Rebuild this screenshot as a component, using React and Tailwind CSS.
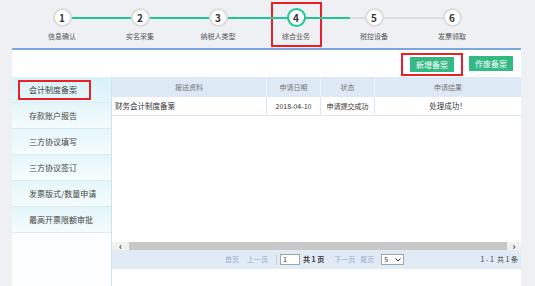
import React from "react";

const steps = ["信息确认", "实名采集", "纳税人类型", "综合业务", "税控设备", "发票领取"];
const menu = ["会计制度备案", "存款账户报告", "三方协议填写", "三方协议签订", "发票版式/数量申请", "最高开票限额审批"];

function Step({ n, label, active }) {
  const circle = (
    <div
      className={`relative z-10 w-[19px] h-[19px] rounded-full bg-white flex items-center justify-center text-[10px] font-bold text-[#333] border-[2.5px] ${
        active ? "border-[#1ec795]" : "border-[#dcdcdc]"
      }`}
    >
      {n}
    </div>
  );
  const text = <div className="mt-[4px] text-[7px] leading-[10px] text-[#555] whitespace-nowrap">{label}</div>;

  if (active) {
    return (
      <div className="w-[78px] flex justify-center">
        <div className="mt-[2px] w-[51px] h-[45px] border-2 border-[#e8202a] flex flex-col items-center pt-[4px]">
          {circle}
          {text}
        </div>
      </div>
    );
  }
  return (
    <div className="w-[78px] flex flex-col items-center pt-[8px]">
      {circle}
      {text}
    </div>
  );
}

export default function App() {
  return (
    <div className="w-[535px] h-[286px] overflow-hidden bg-[#eef0f4] pl-[12px] pr-[14px] font-['Noto_Sans_CJK_SC',sans-serif]">
      {/* steps */}
      <div className="relative h-[48px] pl-[11px] flex">
        <div className="absolute top-[17px] left-[50px] w-[288px] h-[2px] bg-[#1ec795]" />
        <div className="absolute top-[17px] left-[338px] w-[102px] h-[2px] bg-[#dcdcdc]" />
        {steps.map((s, i) => (
          <Step key={s} n={i + 1} label={s} active={i === 3} />
        ))}
      </div>

      {/* panel */}
      <div className="h-[238px] bg-white border-t-2 border-[#78a8da] flex flex-col">
        <div className="h-[27px] flex items-center justify-end pr-[8px]">
          <div className="flex border-2 border-[#e8202a] px-[7px] py-[2px] mt-[1px]">
            <button className="block w-[44px] h-[15px] bg-[#33b983] text-white text-[8px] leading-[15px]">新增备案</button>
          </div>
          <button className="block ml-[6px] w-[44px] h-[15px] bg-[#33b983] text-white text-[8px] leading-[15px]">作废备案</button>
        </div>

        <div className="flex flex-1">
          {/* sidebar */}
          <div className="w-[100px] border-r border-[#cfe3ef] bg-[#fcfeff] flex flex-col">
            {menu.map((m, i) => (
              <div
                key={m}
                className={`h-[26px] border-b border-[#d6edf4] flex items-center text-[8px] text-[#444] ${
                  i === 0
                    ? "bg-gradient-to-b from-[#d9f1f7] to-[#e6f7fb] pl-[6px]"
                    : "bg-gradient-to-b from-[#e4f6fa] to-[#f6fdfe] pl-[17px]"
                }`}
              >
                {i === 0 ? (
                  <span className="border-2 border-[#e8202a] w-[73px] h-[20px] pl-[9px] leading-[16px]">{m}</span>
                ) : (
                  m
                )}
              </div>
            ))}
          </div>

          {/* table */}
          <div className="flex-1 flex flex-col">
            <div className="h-[20px] grid grid-cols-[155px_54px_54px_1fr] bg-[#dde9f5] text-[7px] text-[#777]">
              <div className="flex items-center justify-center border-r border-[#eef4fa]">报送资料</div>
              <div className="flex items-center justify-center border-r border-[#eef4fa]">申请日期</div>
              <div className="flex items-center justify-center border-r border-[#eef4fa]">状态</div>
              <div className="flex items-center justify-center">申请结果</div>
            </div>
            <div className="h-[19px] grid grid-cols-[155px_54px_54px_1fr] border-b border-[#e2e6ea] text-[7.5px] text-[#333]">
              <div className="flex items-center pl-[3px] border-r border-[#e2e6ea]">财务会计制度备案</div>
              <div className="flex items-center justify-center border-r border-[#e2e6ea] text-[7px]">2018-04-10</div>
              <div className="flex items-center justify-center border-r border-[#e2e6ea] text-[7px]">申请提交成功</div>
              <div className="flex items-center justify-center">处理成功！</div>
            </div>
            <div className="flex-1" />

            {/* scrollbar */}
            <div className="h-[8px] flex items-center bg-[#f1f1f1] text-[#333]">
              <div className="w-[17px] h-full flex items-center justify-center text-[9px] font-bold leading-none">‹</div>
              <div className="flex-1 h-full bg-[#c8c8c8]" />
              <div className="w-[14px] h-full flex items-center justify-center text-[9px] font-bold leading-none">›</div>
            </div>

            {/* pagination */}
            <div className="h-[19px] bg-[#e1ebf5] flex items-center pl-[113px] pr-[3px] text-[7px] text-[#9bb0cc]">
              <span>首页</span>
              <span className="ml-[8px]">上一页</span>
              <span className="ml-[8px] w-px h-[10px] bg-[#c5d3e3]" />
              <div className="ml-[3px] w-[20px] h-[11px] bg-white border border-[#9aa] text-[7px] text-[#333] leading-[9px] pl-[2px]">1</div>
              <span className="ml-[3px] text-[#333] font-bold">共 1 页</span>
              <span className="ml-[10px]">下一页</span>
              <span className="ml-[5px]">尾页</span>
              <div className="ml-[7px] w-[23px] h-[11px] bg-white border border-[#9aa] flex items-center justify-between px-[2px] text-[7px] text-[#333]">
                <span>5</span>
                <svg width="6" height="4" viewBox="0 0 6 4">
                  <path d="M0.5 0.5 L3 3 L5.5 0.5" fill="none" stroke="#333" strokeWidth="1" />
                </svg>
              </div>
              <span className="ml-auto text-[#444]">1 - 1&nbsp;&nbsp;共 1 条</span>
            </div>
            <div className="h-[17px]" />
          </div>
        </div>
      </div>
    </div>
  );
}
